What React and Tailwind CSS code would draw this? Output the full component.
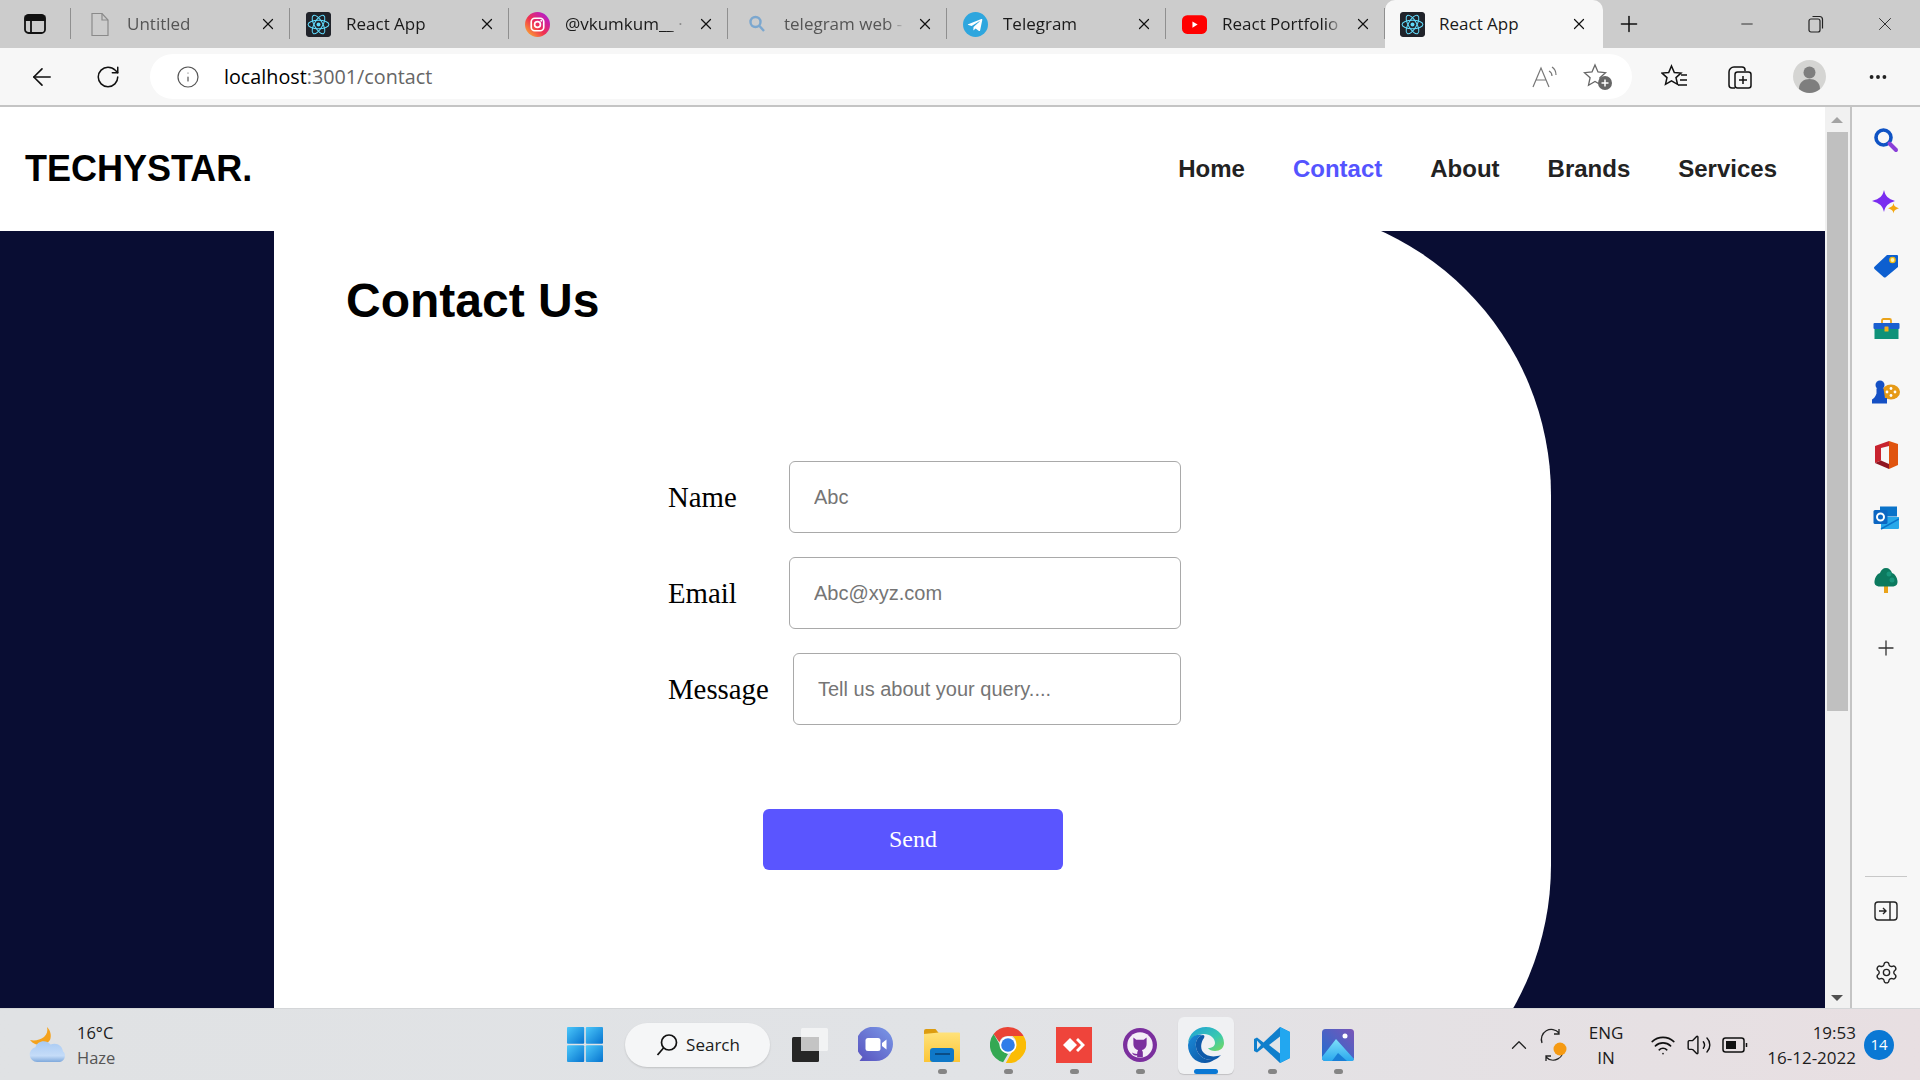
import React from 'react';
import { ArrowLeft, RotateCw, Info, X, Plus, Minus, Settings, Ellipsis, ChevronUp, Wifi, Volume2 } from 'lucide-react';

// --- favicons ---
const ReactIcon = () => (
  <svg width="25" height="25" viewBox="0 0 24 24" className="rounded-[3px]">
    <rect width="24" height="24" rx="2" fill="#20232a" />
    <g stroke="#61dafb" strokeWidth="1" fill="none">
      <ellipse cx="12" cy="12" rx="10" ry="4" />
      <ellipse cx="12" cy="12" rx="10" ry="4" transform="rotate(60 12 12)" />
      <ellipse cx="12" cy="12" rx="10" ry="4" transform="rotate(120 12 12)" />
    </g>
    <circle cx="12" cy="12" r="1.9" fill="#61dafb" />
  </svg>
);

const PageIcon = () => (
  <svg width="20" height="25" viewBox="0 0 20 25" fill="none" stroke="#8a8a8a" strokeWidth="1.2">
    <path d="M2 1.5h10l6 6.5v15.5H2z" />
    <path d="M12 1.5V8h6" />
  </svg>
);

const InstaIcon = () => (
  <svg width="25" height="25" viewBox="0 0 24 24">
    <defs>
      <linearGradient id="ig" x1="0" y1="1" x2="1" y2="0">
        <stop offset="0" stopColor="#fdc22c" />
        <stop offset="0.45" stopColor="#f0304f" />
        <stop offset="0.8" stopColor="#c31fb4" />
        <stop offset="1" stopColor="#6a3be4" />
      </linearGradient>
    </defs>
    <circle cx="12" cy="12" r="12" fill="url(#ig)" />
    <rect x="6" y="6" width="12" height="12" rx="3.4" fill="none" stroke="#fff" strokeWidth="1.6" />
    <circle cx="12" cy="12" r="2.8" fill="none" stroke="#fff" strokeWidth="1.6" />
    <circle cx="15.6" cy="8.4" r="0.9" fill="#fff" />
  </svg>
);

const SearchTabIcon = () => (
  <svg width="20" height="20" viewBox="0 0 20 20" fill="none" stroke="#7ba7cf" strokeWidth="2.4">
    <circle cx="8.5" cy="8" r="5" />
    <path d="M12.5 12l4.5 5" />
  </svg>
);

const TelegramIcon = () => (
  <svg width="25" height="25" viewBox="0 0 24 24">
    <circle cx="12" cy="12" r="12" fill="#2ea6de" />
    <path d="M5 11.8l12.6-5c.6-.2 1.100.1.900.9l-2.100 10c-.1.700-.6.800-1.100.5l-3.200-2.400-1.600 1.500c-.2.200-.3.300-.6.300l.2-3.200 5.900-5.300c.3-.2-.1-.4-.4-.2l-7.300 4.600-3.100-1c-.7-.2-.7-.7-.1-1z" fill="#fff" />
  </svg>
);

const YoutubeIcon = () => (
  <svg width="25" height="25" viewBox="0 0 24 24">
    <rect x="0" y="3" width="24" height="18" rx="5" fill="#f00" />
    <path d="M10 9l5 3-5 3z" fill="#fff" />
  </svg>
);

// --- edge sidebar ---
const SideSearch = () => (
  <svg width="26" height="26" viewBox="0 0 26 26" fill="none">
    <circle cx="10.500" cy="10.500" r="7.500" stroke="#0f53c4" strokeWidth="3.600" />
    <path d="M16.500 16.500l6.500 6.500" stroke="#8a3fd8" strokeWidth="4" strokeLinecap="round" />
  </svg>
);
const SideSpark = () => (
  <svg width="28" height="26" viewBox="0 0 28 26">
    <path d="M12 0c1.300 6 4 8.700 11 11-7 2.300-9.700 5-11 11C10.700 16 8 13.300 0 11c8-2.300 10.700-5 12-11z" fill="#7a2cf0" />
    <path d="M21.500 13c.6 3 1.600 4 5.500 5.200-3.900 1.200-4.900 2.200-5.500 5.300-.6-3.100-1.600-4.100-5.500-5.300 3.900-1.200 4.900-2.200 5.500-5.200z" fill="#f5a70e" />
  </svg>
);
const SideTag = () => (
  <svg width="26" height="26" viewBox="0 0 26 26">
    <path d="M14 2h10a1 1 0 0 1 1 1v11L13 24a2 2 0 0 1-2.500 0L1.500 16a1.500 1.500 0 0 1 0-2.200z" fill="#0d5fd0" />
    <circle cx="19.500" cy="7" r="2.600" fill="#fff3b0" stroke="#f2b90f" strokeWidth="1.400" />
  </svg>
);
const SideBox = () => (
  <svg width="27" height="22" viewBox="0 0 27 22">
    <path d="M9 6V2.500A1.500 1.500 0 0 1 10.500 1h6A1.500 1.500 0 0 1 18 2.500V6" fill="none" stroke="#eaa31a" strokeWidth="1.800" />
    <rect x="0.500" y="5" width="26" height="6" rx="1" fill="#1a5fd0" />
    <rect x="1.500" y="11" width="24" height="10" fill="#0f9279" />
    <rect x="11.500" y="8.500" width="4" height="5" rx="0.500" fill="#f5b21a" />
  </svg>
);
const SideGames = () => (
  <svg width="28" height="24" viewBox="0 0 28 24">
    <ellipse cx="19" cy="12" rx="9" ry="7.500" fill="#e69a16" />
    <g fill="#fff"><circle cx="15" cy="12" r="1.400" /><circle cx="19" cy="8.500" r="1.400" /><circle cx="19" cy="15.500" r="1.400" /><circle cx="23" cy="12" r="1.400" /></g>
    <circle cx="8" cy="5" r="4.500" fill="#1550c4" />
    <path d="M4.500 8.500h7l1.500 9.500h2v5.500H0v-4c2-1 3.500-3 4.500-6z" fill="#1550c4" />
  </svg>
);
const SideOffice = () => (
  <svg width="25" height="28" viewBox="0 0 25 28">
    <path d="M15 0l9 3v21l-9 4z" fill="#e0540f" />
    <path d="M15 0L1 5v17l6-2.500V7l8-2z" fill="#c8232f" />
    <path d="M1 22l14 6v-5L7 19.500z" fill="#8f1622" />
  </svg>
);
const SideOutlook = () => (
  <svg width="26" height="24" viewBox="0 0 26 24">
    <rect x="7" y="0.500" width="17" height="10" fill="#0a73c9" />
    <path d="M8 11h18v11a1 1 0 0 1-1 1H9a1 1 0 0 1-1-1z" fill="#28a8ea" />
    <path d="M8 23l18-10" stroke="#0a73c9" strokeWidth="1.500" />
    <rect x="0.500" y="4" width="14" height="14" rx="1.500" fill="#0c66c2" />
    <circle cx="7.500" cy="11" r="3.500" fill="none" stroke="#fff" strokeWidth="2" />
  </svg>
);
const SideTree = () => (
  <svg width="24" height="25" viewBox="0 0 24 25">
    <rect x="10" y="17" width="4" height="8" fill="#eaa31a" />
    <path d="M12 0c3 0 5 2 6 5 3 1 5 4 5.500 8 .3 3-1 5-4 5.500H4.500C1.500 18 0 16 .5 13 1 9 3 6 6 5c1-3 3-5 6-5z" fill="#0c7a5f" />
    <circle cx="15" cy="6" r="2.500" fill="#18957a" /><circle cx="18" cy="12" r="2.500" fill="#18957a" />
  </svg>
);

// --- taskbar ---
const WinLogo = () => (
  <svg width="36" height="35" viewBox="0 0 36 35">
    <defs>
      <linearGradient id="win" x1="0" y1="0" x2="1" y2="1">
        <stop offset="0" stopColor="#4cc8fa" />
        <stop offset="1" stopColor="#0673cf" />
      </linearGradient>
    </defs>
    <rect x="0" y="0" width="17.200" height="16.800" rx="1" fill="url(#win)" />
    <rect x="18.800" y="0" width="17.200" height="16.800" rx="1" fill="url(#win)" />
    <rect x="0" y="18.200" width="17.200" height="16.800" rx="1" fill="url(#win)" />
    <rect x="18.800" y="18.200" width="17.200" height="16.800" rx="1" fill="url(#win)" />
  </svg>
);
const Weather = () => (
  <svg width="37" height="36" viewBox="0 0 37 36">
    <defs>
      <linearGradient id="cloud" x1="0" y1="0" x2="0" y2="1">
        <stop offset="0" stopColor="#a8caf3" />
        <stop offset="0.7" stopColor="#c5dcf8" />
        <stop offset="1" stopColor="#7fa9dc" />
      </linearGradient>
    </defs>
    <path d="M18 0c3 3 5 8 3 13-2 3-5 5-9 5-4 0-8-1-11-5 5 1 10 0 14-3 3-3 4-6 3-10z" fill="#f4a21c" />
    <path d="M8 35a7.500 7.500 0 0 1-1.500-14.800C8 14 17 12 21.500 17.500c6-2.500 12 1 12.500 7 3 1.500 3 9-3 10.500z" fill="url(#cloud)" />
  </svg>
);
const TaskView = () => (
  <svg width="36" height="34" viewBox="0 0 36 34">
    <rect x="9" y="0" width="27" height="23" rx="1.500" fill="#f2f3f4" />
    <rect x="0" y="9" width="27" height="25" rx="1.500" fill="#262626" />
    <rect x="9" y="9" width="18" height="14" fill="#c4c4c4" />
  </svg>
);
const Teams = () => (
  <svg width="35" height="35" viewBox="0 0 35 35">
    <defs>
      <linearGradient id="tm" x1="1" y1="0" x2="0" y2="1">
        <stop offset="0" stopColor="#7b9ae8" />
        <stop offset="1" stopColor="#5750bd" />
      </linearGradient>
    </defs>
    <path d="M18 0a17 17 0 0 1 0 34H1.500l3-4A17 17 0 0 1 18 0z" fill="url(#tm)" />
    <rect x="7.500" y="11" width="15" height="13" rx="2.500" fill="#fff" />
    <path d="M24 16l4.500-3.500v10L24 19z" fill="#fff" />
  </svg>
);
const Folder = () => (
  <svg width="36" height="33" viewBox="0 0 36 33">
    <defs>
      <linearGradient id="fld" x1="0" y1="0" x2="0" y2="1">
        <stop offset="0" stopColor="#ffe27a" />
        <stop offset="1" stopColor="#fcc536" />
      </linearGradient>
    </defs>
    <path d="M0 2a2 2 0 0 1 2-2h9.500l4 5H0z" fill="#dc9c10" />
    <path d="M0 5l15-1.500h20a1 1 0 0 1 1 1V33H0z" fill="url(#fld)" />
    <rect x="6" y="19" width="24" height="14" rx="3" fill="#0f78c8" />
    <rect x="11" y="24" width="15" height="2" fill="#0a4d85" />
  </svg>
);
const Chrome = () => (
  <svg width="36" height="36" viewBox="0 0 36 36">
    <path d="M18 0a18 18 0 0 1 15.600 9H18a9 9 0 0 0-8.600 6.200L3.600 7A18 18 0 0 1 18 0z" fill="#ea4335" />
    <path d="M3.600 7l7.800 13.500A9 9 0 0 0 18 27l-4.900 8.300A18 18 0 0 1 3.600 7z" fill="#34a853" />
    <path d="M33.600 9A18 18 0 0 1 15.800 36L23 23a9 9 0 0 0-.5-14z" fill="#fbbc05" />
    <circle cx="18" cy="18" r="8.500" fill="#fff" />
    <circle cx="18" cy="18" r="6.800" fill="#2f7de9" />
  </svg>
);
const AnyDesk = () => (
  <svg width="36" height="36" viewBox="0 0 36 36">
    <rect width="36" height="36" fill="#ef443b" />
    <path d="M14 11l7 7-7 7-7-7z" fill="#fff" />
    <path d="M22 11l7 7-7 7-2-2 5-5-5-5z" fill="#fff" />
  </svg>
);
const GithubIcon = () => (
  <svg width="34" height="34" viewBox="0 0 36 36">
    <circle cx="18" cy="18" r="18" fill="#7b2f9e" />
    <circle cx="18" cy="18" r="13.500" fill="#f3eef6" />
    <path d="M11 10l3 2.500h8l3-2.500v7c0 3.500-2.500 6-5 6.500.6.700 1 1.500 1 2.500v5h-6v-2c-3 .5-4.500-.5-5.500-3 1.500.5 2.500 1.500 5.500 1.500 0-1.500.4-3 1-4-2.500-.5-5-3-5-6.500z" fill="#7b2f9e" />
  </svg>
);
const EdgeIcon = () => (
  <svg width="36" height="36" viewBox="0 0 36 36">
    <defs>
      <linearGradient id="edg" x1="0" y1="0" x2="1" y2="1">
        <stop offset="0" stopColor="#1f9fd8" />
        <stop offset="0.6" stopColor="#39c9b0" />
        <stop offset="1" stopColor="#7ad95a" />
      </linearGradient>
      <linearGradient id="edb" x1="0" y1="0" x2="1" y2="1">
        <stop offset="0" stopColor="#1a8ad8" />
        <stop offset="1" stopColor="#0c4f9e" />
      </linearGradient>
    </defs>
    <path d="M18 0c10 0 18 7 18 16 0 5-4 8-9 8-3 0-6-1-7-3 4 0 7-2 7-5 0-5-5-9-11-9C9 7 3 10 0 16 1 7 8 0 18 0z" fill="url(#edg)" />
    <path d="M0 18c1-8 9-12 15-10-5 1-8 6-7 12 1 7 7 14 18 13-3 2-6 3-9 3C7 36 0 28 0 18z" fill="url(#edb)" />
    <path d="M15 8c-5 1-8 6-7 12 1 7 7 14 18 13 3-1 5-3 7-5-8 3-15 1-18-3-3-4-2-10 1-14 1-2 0-3-1-3z" fill="#0e5aaa" />
  </svg>
);
const VSCode = () => (
  <svg width="36" height="36" viewBox="0 0 36 36">
    <path d="M26 0l10 5v26l-10 5L9.500 20.500 3 25.500 0 24V12l3-1.500 6.500 5z" fill="#0f7fcc" />
    <path d="M26 0l10 5v26l-10 5z" fill="#22a7f0" />
    <path d="M26 9.500L15 18l11 8.500z" fill="#e1e4e8" />
    <path d="M3 13.500L7 18l-4 4.500z" fill="#e1e4e8" />
  </svg>
);
const Photos = () => (
  <svg width="32" height="32" viewBox="0 0 32 32">
    <defs>
      <linearGradient id="ph" x1="0" y1="1" x2="1" y2="0">
        <stop offset="0" stopColor="#1d6fd0" />
        <stop offset="1" stopColor="#7a55b8" />
      </linearGradient>
      <linearGradient id="ph2" x1="0" y1="0" x2="0" y2="1">
        <stop offset="0" stopColor="#7fe0fa" />
        <stop offset="1" stopColor="#2aa8ee" />
      </linearGradient>
    </defs>
    <rect width="32" height="32" rx="3.500" fill="url(#ph)" />
    <circle cx="23" cy="7" r="2.500" fill="#fff" />
    <path d="M0 28L14 10l18 20a2 2 0 0 1-2 2H3a3 3 0 0 1-3-4z" fill="url(#ph2)" />
    <path d="M10 32l6-8 9 8z" fill="#1a7fd6" />
  </svg>
);

const tabs = [
  { title: 'Untitled', icon: <PageIcon />, muted: true },
  { title: 'React App', icon: <ReactIcon /> },
  { title: '@vkumkum__ ·', icon: <InstaIcon /> },
  { title: 'telegram web -', icon: <SearchTabIcon />, muted: true },
  { title: 'Telegram', icon: <TelegramIcon /> },
  { title: 'React Portfolio', icon: <YoutubeIcon /> },
];

const sideIcons = [<SideSearch />, <SideSpark />, <SideTag />, <SideBox />, <SideGames />, <SideOffice />, <SideOutlook />, <SideTree />];

const taskIcons = [
  { icon: <Folder />, dot: true },
  { icon: <Chrome />, dot: true },
  { icon: <AnyDesk />, dot: true },
  { icon: <GithubIcon />, dot: true },
  { icon: <EdgeIcon />, active: true },
  { icon: <VSCode />, dot: true },
  { icon: <Photos />, dot: true },
];

const Tab = ({ tab }) => (
  <div className="flex h-full w-[219px] items-center border-r border-[#8f8f8f] [border-image:linear-gradient(transparent_18%,#8f8f8f_18%,#8f8f8f_80%,transparent_80%)_1]">
    <div className="flex w-[56px] justify-center pl-[1px]">{tab.icon}</div>
    <span className={`w-[122px] overflow-hidden whitespace-nowrap text-[17px] ${tab.muted ? 'text-[#555]' : 'text-[#1a1a1a]'} [mask-image:linear-gradient(90deg,#000_85%,transparent)]`}>{tab.title}</span>
    <div className="flex flex-1 justify-center pr-[2px]"><X size={18} strokeWidth={1.600} color="#111" /></div>
  </div>
);

const Field = ({ label, labelW, inputW, placeholder }) => (
  <div className="flex items-center">
    <label className={`${labelW} mt-[2px] font-['Liberation_Serif',serif] text-[28.800px] text-black`}>{label}</label>
    <input placeholder={placeholder} className={`${inputW} h-[72px] rounded-[6px] border border-[#a9a9a9] bg-white pl-[24px] font-['Liberation_Sans',sans-serif] text-[20px] outline-none placeholder:text-[#757575]`} />
  </div>
);

const App = () => {
  return (
    <div className="flex h-[1080px] w-[1920px] flex-col overflow-hidden bg-[#f7f7f7] font-['Open_Sans',sans-serif]">

      {/* tab strip */}
      <header className="flex h-[48px] items-center bg-[#cccccc]">
        <div className="flex h-full w-[71px] items-center justify-center border-r border-[#8f8f8f] [border-image:linear-gradient(transparent_18%,#8f8f8f_18%,#8f8f8f_80%,transparent_80%)_1]">
          <svg width="24" height="24" viewBox="0 0 24 24" fill="none" stroke="#111" strokeWidth="1.800">
            <rect x="2" y="3" width="20" height="18" rx="3.500" />
            <path d="M2.500 4.500h19V8h-19z" fill="#111" />
            <path d="M8 8v13" />
          </svg>
        </div>
        {tabs.map((t) => <Tab key={t.title} tab={t} />)}
        <div className="flex h-full w-[218px] items-center rounded-t-[10px] bg-[#f7f7f7]">
          <div className="flex w-[54px] justify-center"><ReactIcon /></div>
          <span className="w-[131px] text-[17px] text-[#1a1a1a]">React App</span>
          <X size={18} strokeWidth={1.600} color="#111" />
        </div>
        <div className="flex w-[52px] justify-center"><Plus size={26} strokeWidth={1.400} color="#111" /></div>
        <div className="flex flex-1 items-center justify-end">
          <div className="flex w-[69px] justify-center"><Minus size={18} strokeWidth={1.200} color="#222" /></div>
          <div className="flex w-[69px] justify-center">
            <svg width="16" height="18" viewBox="0 0 16 18" fill="none" stroke="#222" strokeWidth="1.200">
              <rect x="1" y="4" width="11" height="13" rx="2" />
              <path d="M4.500 1.500h7a3 3 0 0 1 3 3v9" />
            </svg>
          </div>
          <div className="flex w-[70px] justify-center"><X size={22} strokeWidth={1} color="#222" /></div>
        </div>
      </header>

      {/* address bar row */}
      <div className="flex h-[59px] items-center border-b-2 border-[#c4c4c4]">
        <div className="flex w-[75px] justify-center pl-[9px]"><ArrowLeft size={28} strokeWidth={1.400} color="#111" /></div>
        <div className="flex w-[65px] justify-center"><RotateCw size={26} strokeWidth={1.400} color="#111" /></div>
        <div className="ml-[10px] flex h-[45px] w-[1482px] items-center rounded-full bg-white">
          <div className="flex w-[76px] justify-center"><Info size={24} strokeWidth={1.200} color="#555" /></div>
          <span className="-ml-[2px] text-[19.750px] text-black">localhost<span className="text-[#666]">:3001/contact</span></span>
          <div className="ml-auto flex items-center gap-[24px] pr-[19px]">
            <svg width="28" height="28" viewBox="0 0 28 28" fill="none" stroke="#777" strokeWidth="1.200">
              <path d="M2 24L10 5l8 19M5 17h10" />
              <path d="M18 8c2 1 3 3 3 5M21 4c3 2 4 5 4 8" />
            </svg>
            <svg width="30" height="28" viewBox="0 0 30 28" fill="none">
              <path d="M12 2l3 7 7.500.7-5.600 5 1.600 7.500L12 18.500 5.500 22.200l1.600-7.500-5.600-5L9 9z" stroke="#666" strokeWidth="1.300" />
              <circle cx="22" cy="20" r="7" fill="#666" />
              <path d="M22 16.500v7M18.500 20h7" stroke="#fff" strokeWidth="1.500" />
            </svg>
          </div>
        </div>
        <div className="flex w-[84px] justify-center pl-[2px]">
          <svg width="28" height="26" viewBox="0 0 28 26" fill="none" stroke="#111" strokeWidth="1.500">
            <path d="M10.500 2l2.800 6.500 6.700.6-5 4.500 1.500 6.700-6-3.500-6 3.500 1.500-6.700-5-4.500 6.700-.6z" />
            <path d="M20 11h6M19 16h7M17 21h9" />
          </svg>
        </div>
        <div className="flex w-[48px] justify-center">
          <svg width="26" height="26" viewBox="0 0 26 26" fill="none" stroke="#111" strokeWidth="1.500">
            <path d="M8 24H5a3 3 0 0 1-3-3V8a5 5 0 0 1 5-5h8a3 3 0 0 1 3 3v1" />
            <rect x="8" y="8" width="16" height="16" rx="2.500" />
            <path d="M16 12v8M12 16h8" />
          </svg>
        </div>
        <div className="flex w-[90px] justify-center">
          <svg width="33" height="33" viewBox="0 0 33 33">
            <circle cx="16.500" cy="16.500" r="16.500" fill="#d5d5d3" />
            <circle cx="16.500" cy="12.500" r="6" fill="#7e7e7e" />
            <path d="M6 29c0-7 5-10 10.500-10S27 22 27 29c-3 2.500-7 4-10.500 4S9 31.500 6 29z" fill="#7e7e7e" />
          </svg>
        </div>
        <div className="flex w-[44px] justify-center pl-[4px]"><Ellipsis size={22} strokeWidth={2.200} color="#222" /></div>
      </div>

      <div className="flex min-h-0 flex-1">
        {/* the page itself */}
        <main className="flex w-[1825px] flex-col overflow-hidden bg-[#090d33] font-['Liberation_Sans',sans-serif]">
          <nav className="relative z-10 flex h-[124px] shrink-0 items-center justify-between bg-white pl-[25px] pr-[48px]">
            <h1 className="text-[36px] font-bold text-black">TECHYSTAR.</h1>
            <ul className="flex gap-[48px] text-[24px] font-bold text-[#222]">
              <li>Home</li>
              <li className="text-[#5454ff]">Contact</li>
              <li>About</li>
              <li>Brands</li>
              <li>Services</li>
            </ul>
          </nav>
          <section className="-mt-[26px] ml-[274px] h-[950px] w-[1277px] shrink-0 rounded-r-[290px] bg-white pl-[72px] pt-[68px]">
            <h2 className="text-[48px] leading-[55px] font-bold text-black">Contact Us</h2>
            <form className="ml-[322px] mt-[133px]">
              <div className="flex flex-col gap-[24px]">
                <Field label="Name" labelW="w-[121px]" inputW="w-[392px]" placeholder="Abc" />
                <Field label="Email" labelW="w-[121px]" inputW="w-[392px]" placeholder="Abc@xyz.com" />
                <Field label="Message" labelW="w-[125px]" inputW="w-[388px]" placeholder="Tell us about your query...." />
              </div>
              <button type="button" className="ml-[95px] mt-[84px] h-[61px] w-[300px] rounded-[6px] bg-[#5a55ff] pb-[2px] font-['Liberation_Serif',serif] text-[24px] text-white">Send</button>
            </form>
          </section>
        </main>

        {/* scrollbar */}
        <div className="flex w-[27px] flex-col items-center border-r-2 border-[#c4c4c4] bg-[#f1f1f1] pr-[1px]">
          <div className="flex h-[25px] items-center"><div className="h-0 w-0 border-x-[6px] border-b-[6px] border-x-transparent border-b-[#a3a3a3]" /></div>
          <div className="h-[579px] w-[21px] bg-[#c0c0c0]" />
          <div className="mt-auto flex h-[20px] items-center"><div className="h-0 w-0 border-x-[6px] border-t-[6px] border-x-transparent border-t-[#505050]" /></div>
        </div>

        {/* edge sidebar */}
        <aside className="flex flex-1 flex-col items-center pt-[1px]">
          {sideIcons.map((icon, i) => (
            <div key={i} className="flex h-[63px] shrink-0 items-center justify-center">{icon}</div>
          ))}
          <div className="mt-[4px] flex h-[63px] items-center justify-center"><Plus size={24} strokeWidth={1.300} color="#333" /></div>
          <div className="mt-auto h-px w-[42px] bg-[#c8c8c8]" />
          <div className="flex h-[68px] items-center justify-center">
            <svg width="24" height="20" viewBox="0 0 24 20" fill="none" stroke="#222" strokeWidth="1.400">
              <rect x="1" y="1" width="22" height="18" rx="3" />
              <path d="M16 1v18M5 10h7M9 7l3 3-3 3" />
            </svg>
          </div>
          <div className="flex h-[63px] items-center justify-center pb-[8px]"><Settings size={25} strokeWidth={1.300} color="#222" /></div>
        </aside>
      </div>

      {/* windows taskbar */}
      <footer className="flex h-[72px] shrink-0 items-center border-t border-[#d4d6d8] bg-linear-to-r from-[#e0e2e4] via-[#e1e3e6] to-[#e8dfe2] text-[#1c1c1c]">
        <div className="flex w-[552px] items-center pl-[29px]">
          <Weather />
          <div className="ml-[11px] text-[16.500px] leading-[25px]">
            <div>16°C</div>
            <div className="text-[#555]">Haze</div>
          </div>
        </div>
        <div className="flex w-[66px] justify-center"><WinLogo /></div>
        <div className="ml-[7px] flex h-[44px] w-[145px] items-center justify-center gap-[7px] rounded-full bg-[#f5f6f7] shadow-[0_1px_2px_rgba(0,0,0,0.15)]">
          <svg width="24" height="24" viewBox="0 0 24 24" fill="none" stroke="#111" strokeWidth="1.700">
            <circle cx="14" cy="9.500" r="7.500" />
            <path d="M8.500 15L2.500 22" />
          </svg>
          <span className="text-[17px]">Search</span>
        </div>
        <div className="ml-[7px] flex w-[66px] justify-center"><TaskView /></div>
        <div className="-ml-[1px] flex w-[66px] justify-center"><Teams /></div>
        {taskIcons.map((t, i) => (
          <div key={i} className={`relative mt-[1px] flex h-[57px] w-[66px] items-center justify-center ${i === 0 ? 'ml-[1px]' : ''}`}>
            {t.active && <div className="absolute inset-y-0 left-[5px] right-[5px] rounded-[6px] bg-[#f0f1f3] shadow-[0_1px_1px_rgba(0,0,0,0.15)]" />}
            <div className="relative flex">{t.icon}</div>
            {t.dot && <div className="absolute bottom-0 h-[5px] w-[9px] rounded-full bg-[#858585]" />}
            {t.active && <div className="absolute bottom-0 h-[5px] w-[24px] rounded-full bg-[#0a78d4]" />}
          </div>
        ))}
        <div className="ml-[135px] flex items-center">
          <ChevronUp size={26} strokeWidth={1.200} color="#222" />
          <div className="ml-[7px] w-[30px]">
            <svg width="30" height="34" viewBox="0 0 30 34" fill="none" stroke="#222" strokeWidth="1.300">
              <path d="M3 15A10 10 0 0 1 20 5M20 1v5h-5M24 20A10 10 0 0 1 7 29M7 33v-5h5" />
              <circle cx="21" cy="21" r="6.500" fill="#f59a13" stroke="none" />
            </svg>
          </div>
          <div className="ml-[9px] w-[56px] text-center text-[17px] leading-[25px]">ENG<br />IN</div>
          <div className="ml-[16px]"><Wifi size={26} strokeWidth={1.500} color="#111" /></div>
          <div className="ml-[10px]"><Volume2 size={26} strokeWidth={1.300} color="#111" /></div>
          <div className="ml-[10px]">
            <svg width="26" height="20" viewBox="0 0 26 20" fill="none" stroke="#111" strokeWidth="1.500">
              <rect x="1" y="3" width="21" height="14" rx="2.500" />
              <path d="M24.500 8v4" />
              <rect x="4" y="6" width="10" height="8" fill="#111" stroke="none" />
            </svg>
          </div>
        </div>
        <div className="ml-[4px] w-[104px] text-right text-[17px] leading-[25px]">19:53<br /><span className="whitespace-nowrap">16-12-2022</span></div>
        <div className="ml-[8px] flex h-[30px] w-[30px] items-center justify-center rounded-full bg-[#0a78d4] text-[15px] text-white">14</div>
      </footer>
    </div>
  );
};

export default App;
